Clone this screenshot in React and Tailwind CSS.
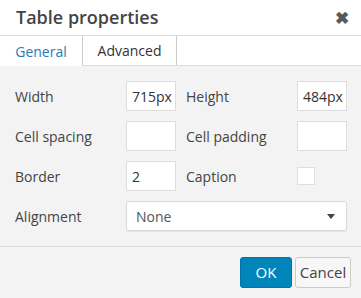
import React from "react";

const Field = ({ value = "" }) => (
  <div className="w-[50px] h-[30px] border border-[#ddd] bg-white px-[5px] flex items-center text-[14px] text-[#333]">
    {value}
  </div>
);

const Row = ({ children }) => (
  <div className="flex items-center h-[30px]">{children}</div>
);

export default function App() {
  return (
    <div
      className="w-[361px] h-[298px] bg-[#f3f3f3] flex flex-col text-[#444]"
      style={{ fontFamily: '"Open Sans", "Liberation Sans", sans-serif' }}
    >
      <div className="h-[36px] bg-white border-b border-[#dcdcdc] flex items-center justify-between pl-[16px] pr-[12px]">
        <span className="text-[18px] font-semibold text-[#444] leading-none -mt-[1px]">Table properties</span>
        <span className="text-[#595959] text-[17px] font-bold leading-none">✖</span>
      </div>
      <div className="h-[30px] bg-white border-b border-[#dcdcdc] flex text-[14px]">
        <div className="w-[83px] -mb-[1px] bg-white border-r border-[#ccc] flex items-center justify-center text-[#2a7ab8]">
          General
        </div>
        <div className="w-[94px] border-r border-[#ccc] flex items-center justify-center text-[#333]">
          Advanced
        </div>
      </div>
      <div className="flex-1 pt-[15px] pl-[15px] flex flex-col gap-[10px] text-[14px] text-[#444] border-b border-[#dcdcdc]">
        <Row>
          <span className="w-[111px]">Width</span>
          <Field value="715px" />
          <span className="w-[121px] pl-[10px]">Height</span>
          <Field value="484px" />
        </Row>
        <Row>
          <span className="w-[111px]">Cell spacing</span>
          <Field />
          <span className="w-[121px] pl-[10px]">Cell padding</span>
          <Field />
        </Row>
        <Row>
          <span className="w-[111px]">Border</span>
          <Field value="2" />
          <span className="w-[121px] pl-[10px]">Caption</span>
          <div className="w-[18px] h-[18px] border border-[#ddd] bg-white" />
        </Row>
        <Row>
          <span className="w-[111px]">Alignment</span>
          <div className="w-[221px] h-[30px] border border-[#d9d9d9] rounded-[3px] bg-white shadow-[0_1px_1px_rgba(0,0,0,0.06)] flex items-center justify-between pl-[9px] pr-[11px] text-[#555]">
            <span>None</span>
            <span className="w-0 h-0 border-l-[4px] border-r-[4px] border-t-[5px] border-l-transparent border-r-transparent border-t-[#444]" />
          </div>
        </Row>
      </div>
      <div className="h-[51px] flex items-center justify-end gap-[3px] pr-[10px] pb-[1px]">
        <button className="w-[52px] h-[31px] rounded-[3px] bg-[#0085ba] border border-[#0073aa] text-white text-[15px]">
          OK
        </button>
        <button className="w-[56px] h-[31px] rounded-[3px] bg-[#f7f7f7] border border-[#ccc] text-[#444] text-[15px]">
          Cancel
        </button>
      </div>
    </div>
  );
}
